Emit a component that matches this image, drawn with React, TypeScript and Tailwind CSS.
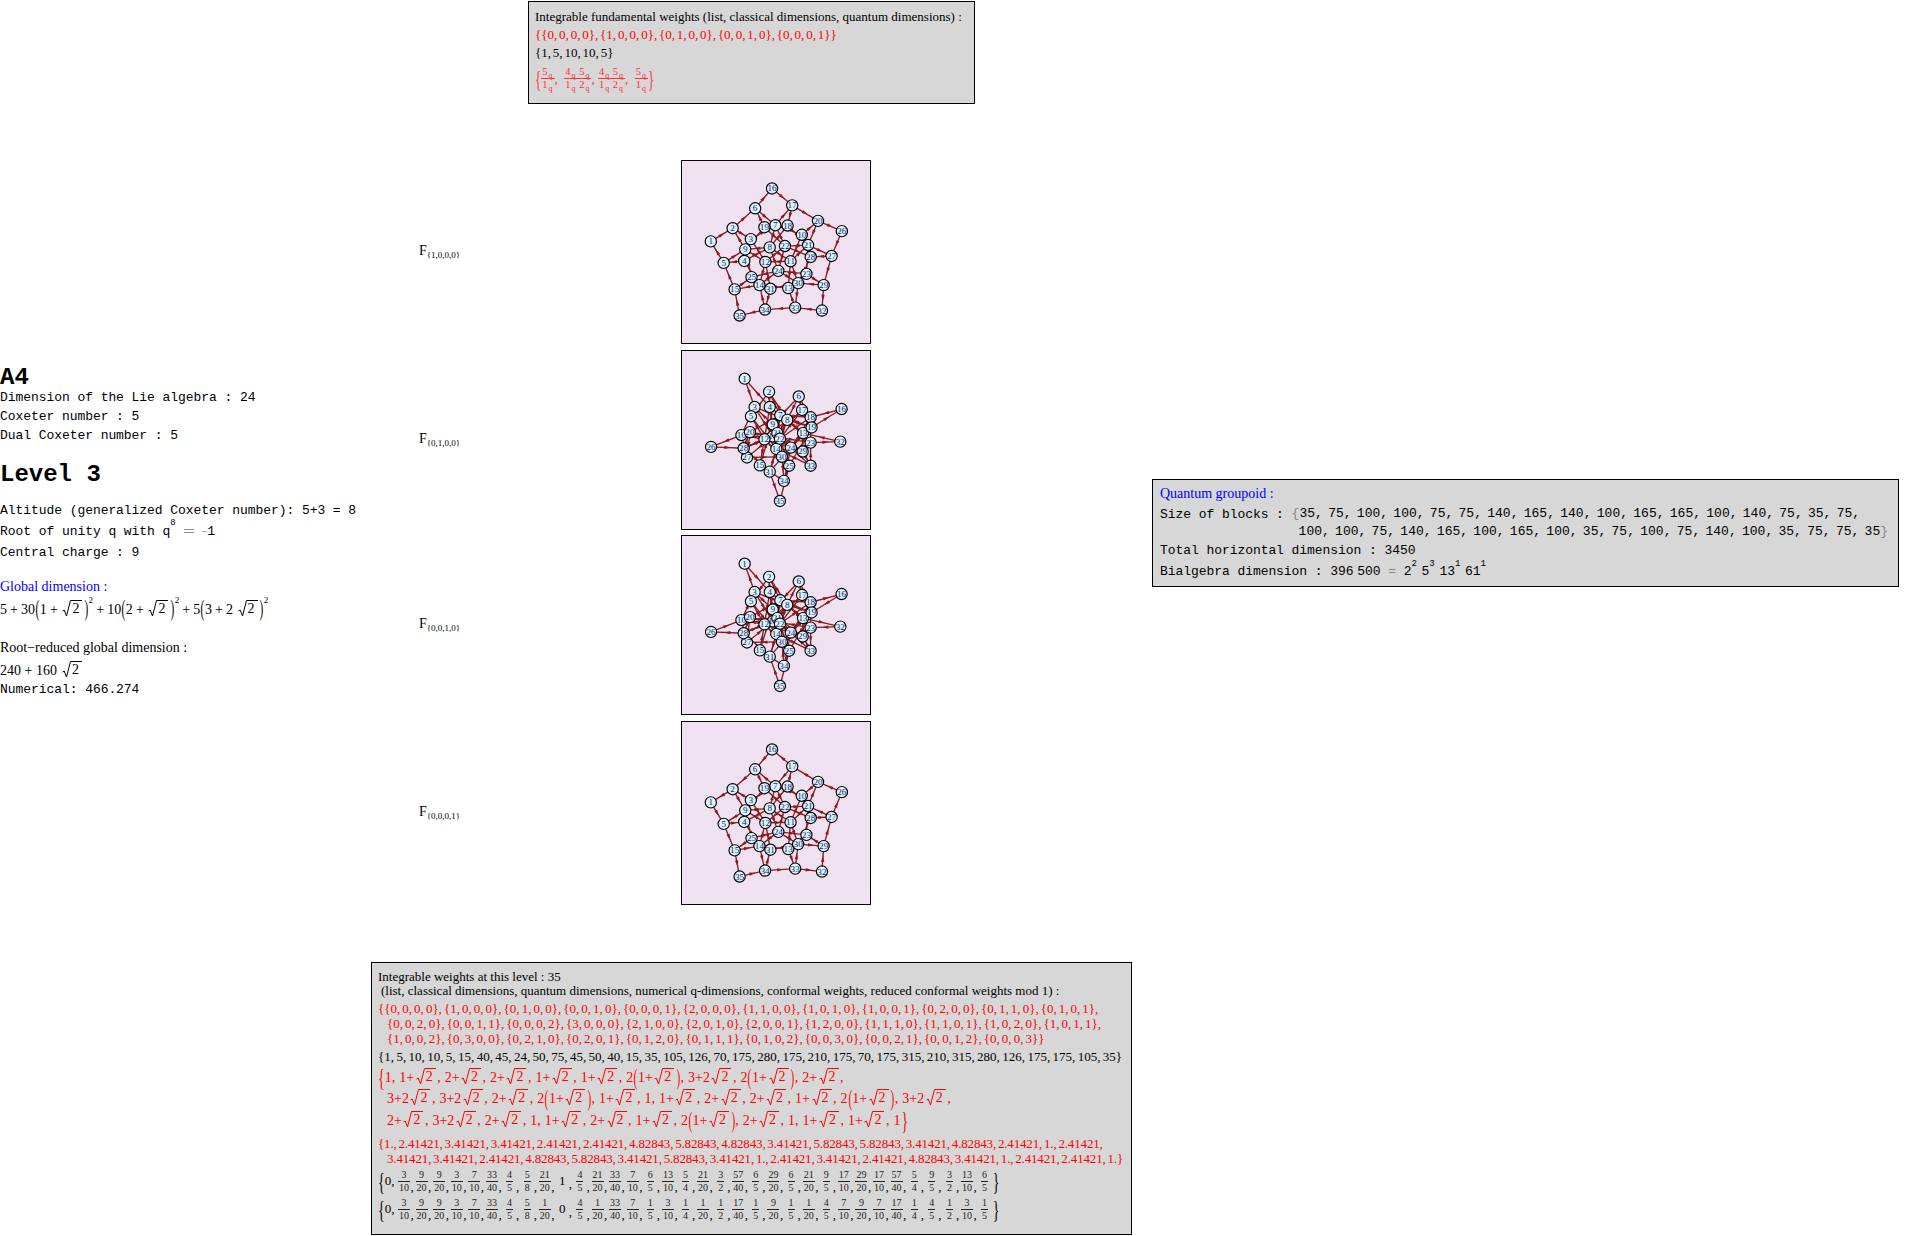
import { ReactNode } from "react";

const mono = "[font-family:'Liberation_Mono',monospace]";

const weights: number[][] = [
  [0,0,0,0],[1,0,0,0],[0,1,0,0],[0,0,1,0],[0,0,0,1],[2,0,0,0],[1,1,0,0],[1,0,1,0],[1,0,0,1],[0,2,0,0],
  [0,1,1,0],[0,1,0,1],[0,0,2,0],[0,0,1,1],[0,0,0,2],[3,0,0,0],[2,1,0,0],[2,0,1,0],[2,0,0,1],[1,2,0,0],
  [1,1,1,0],[1,1,0,1],[1,0,2,0],[1,0,1,1],[1,0,0,2],[0,3,0,0],[0,2,1,0],[0,2,0,1],[0,1,2,0],[0,1,1,1],
  [0,1,0,2],[0,0,3,0],[0,0,2,1],[0,0,1,2],[0,0,0,3],
];

const eps = [[1,0,0,0],[-1,1,0,0],[0,-1,1,0],[0,0,-1,1],[0,0,0,-1]];

// fusion with the k-th fundamental weight, truncated at level 3
function fusionEdges(k: number): [number, number][] {
  const shifts: number[][] = [];
  for (let mask = 0; mask < 32; mask++) {
    const picked = eps.filter((_, i) => mask & (1 << i));
    if (picked.length !== k) continue;
    shifts.push([0,1,2,3].map((c) => picked.reduce((s, e) => s + e[c], 0)));
  }
  const out: [number, number][] = [];
  weights.forEach((w, i) => {
    shifts.forEach((s) => {
      const t = w.map((v, c) => v + s[c]);
      if (t.some((v) => v < 0) || t.reduce((a, b) => a + b, 0) > 3) return;
      const j = weights.findIndex((u) => u.join() === t.join());
      if (j >= 0 && j !== i) out.push([i, j]);
    });
  });
  return out;
}

const pentagon: [number, number][] = [
  [106,259],[172,219],[227,252],[207,318],[145,324],[240,159],[301,210],[284,277],[210,283],[381,239],
  [347,319],[271,321],[340,400],[253,391],[178,404],[291,99],[352,150],[338,211],[268,216],[430,197],
  [400,270],[330,273],[395,357],[310,348],[229,367],[502,228],[471,303],[408,306],[447,391],[370,385],
  [286,402],[442,468],[361,459],[270,465],[193,483],
];

const star: [number, number][] = [
  [208,97],[282,137],[238,183],[284,183],[227,211],[372,151],[316,208],[337,222],[293,236],[198,268],
  [293,272],[268,281],[385,262],[304,310],[254,360],[502,189],[382,192],[408,214],[411,245],[224,259],
  [307,262],[315,279],[408,291],[348,306],[343,361],[106,304],[215,336],[205,308],[384,318],[321,334],
  [284,379],[498,288],[408,361],[327,407],[315,468],
];

function FusionGraph({ nodes, k, box }: { nodes: [number, number][]; k: number; box: string }) {
  return (
    <svg viewBox={box} className="block w-full h-full">
      {fusionEdges(k).map(([a, b], i) => {
        const [x1, y1] = nodes[a];
        const [x2, y2] = nodes[b];
        const mx = (x1 + x2) / 2;
        const my = (y1 + y2) / 2;
        const ang = (Math.atan2(y2 - y1, x2 - x1) * 180) / Math.PI;
        return (
          <g key={i} fill="#8b1a1f" stroke="#8b1a1f">
            <line x1={x1} y1={y1} x2={x2} y2={y2} strokeWidth={4} />
            <polygon points="10,0 -9,-5 -9,5" stroke="none" transform={`translate(${mx} ${my}) rotate(${ang})`} />
          </g>
        );
      })}
      {nodes.map(([x, y], i) => (
        <g key={i}>
          <circle cx={x} cy={y} r={17} fill="#dbf2fb" stroke="#000" strokeWidth={3.5} />
          <text x={x} y={y + 9} textAnchor="middle" fontSize={28} fill="#14206a" fontFamily="'Liberation Serif', serif">
            {i + 1}
          </text>
        </g>
      ))}
    </svg>
  );
}

function Sqrt({ children }: { children: ReactNode }) {
  return (
    <span className="inline-flex items-end align-[-3px] mx-[1.5px]">
      <svg width="9" height="17" viewBox="0 0 9 17" className="block">
        <path d="M0.5 11 L2.2 10 L4.5 16 L8.5 0.5 H9" fill="none" stroke="currentColor" strokeWidth="1" />
      </svg>
      <span className="border-t border-current pl-px pr-[3px] leading-[16px] h-[17px]">{children}</span>
    </span>
  );
}

function Paren({ children }: { children: ReactNode }) {
  return <span className="inline-block scale-y-[1.6] scale-x-[0.8] font-light">{children}</span>;
}

function Frac({ n, d, cls }: { n: ReactNode; d: ReactNode; cls: string }) {
  return (
    <span className={`inline-flex flex-col items-center align-middle ${cls}`}>
      <span className="px-px">{n}</span>
      <span className="px-px border-t border-current">{d}</span>
    </span>
  );
}

function Qn({ v }: { v: number }) {
  return (
    <span className="pr-[1px]">
      {v}
      <sub className="text-[8px] align-[-1px] leading-none pl-px">q</sub>
    </span>
  );
}

function Brace({ children, cls = "" }: { children: ReactNode; cls?: string }) {
  return <span className={`inline-block scale-y-[1.8] font-light ${cls}`}>{children}</span>;
}

const quantumDims: string[][] = [
  ["1","a","b","b","a","a","d","c","d","b"],
  ["c","c","b","d","a","1","a","b","b","a","d","c"],
  ["b","c","b","1","a","b","a","d","b","1","a","a","1"],
];

function QDim({ t }: { t: string }) {
  if (t === "1") return <span>1</span>;
  if (t === "a") return <span>1+<Sqrt>2</Sqrt></span>;
  if (t === "b") return <span>2+<Sqrt>2</Sqrt></span>;
  if (t === "c") return <span>3+2<Sqrt>2</Sqrt></span>;
  return <span>2<Paren>(</Paren>1+<Sqrt>2</Sqrt><Paren>)</Paren></span>;
}

const conformal = "3/10 9/20 9/20 3/10 7/10 33/40 4/5 5/8 21/20 1 4/5 21/20 33/40 7/10 6/5 13/10 5/4 21/20 3/2 57/40 6/5 29/20 6/5 21/20 9/5 17/10 29/20 17/10 57/40 5/4 9/5 3/2 13/10 6/5".split(" ");
const reduced = "3/10 9/20 9/20 3/10 7/10 33/40 4/5 5/8 1/20 0 4/5 1/20 33/40 7/10 1/5 3/10 1/4 1/20 1/2 17/40 1/5 9/20 1/5 1/20 4/5 7/10 9/20 7/10 17/40 1/4 4/5 1/2 3/10 1/5".split(" ");

function FracList({ items }: { items: string[] }) {
  return (
    <div className="flex items-center h-[28px]">
      <span className="text-[14px]"><Brace>{"{"}</Brace></span>
      <span className="text-[13px] mr-[3px]">0,</span>
      {items.map((f, i) => {
        const [n, d] = f.split("/");
        return (
          <span key={i} className="flex items-end w-[17.6px] shrink-0 text-[13px]">
            {d ? <Frac n={n} d={d} cls="text-[10px] leading-[12px] text-[#222] w-[13px]" /> : <span className="w-[13px] text-center self-center">{n}</span>}
            {i < items.length - 1 ? <span className="text-[13px] leading-[15px]">,</span> : null}
          </span>
        );
      })}
      <span className="text-[14px] -ml-[3px]"><Brace>{"}"}</Brace></span>
    </div>
  );
}

const panels = [
  { label: "{1,0,0,0}", nodes: pentagon, k: 1, box: "19 16 568 550", h: "h-[184px]" },
  { label: "{0,1,0,0}", nodes: star, k: 2, box: "19 13 568 540", h: "h-[180px]" },
  { label: "{0,0,1,0}", nodes: star, k: 3, box: "19 13 568 540", h: "h-[180px]" },
  { label: "{0,0,0,1}", nodes: pentagon, k: 4, box: "19 16 568 550", h: "h-[184px]" },
];

function MonoLine({ children, cls = "" }: { children: ReactNode; cls?: string }) {
  return <div className={`${mono} text-[13px] tracking-[-0.06px] leading-[19px] whitespace-pre ${cls}`}>{children}</div>;
}

const sup9 = "text-[9px] align-[5px] leading-none";
const sup2 = "text-[9px] align-[6px] leading-none";

export default function App() {
  return (
    <div className="w-[1908px] h-[1236px] bg-white text-black text-[13px] overflow-hidden [font-family:'Liberation_Serif',serif]">
      <div className="mt-px ml-[528px] w-[447px] h-[103px] border border-black bg-[#d7d7d7] pl-[6px] pt-[6px] leading-[17px]">
        <div>Integrable fundamental weights (list, classical dimensions, quantum dimensions) :</div>
        <div className="text-[#ff0000] mt-[1px] [word-spacing:-1.4px]">{"{{0, 0, 0, 0}, {1, 0, 0, 0}, {0, 1, 0, 0}, {0, 0, 1, 0}, {0, 0, 0, 1}}"}</div>
        <div className="mt-[1px] [word-spacing:-1.4px]">{"{1, 5, 10, 10, 5}"}</div>
        <div className="text-[#ff3040] flex items-center mt-[3px] h-[28px] whitespace-pre">
          <Brace>{"{"}</Brace>
          <Frac n={<Qn v={5} />} d={<Qn v={1} />} cls="text-[10.5px] leading-[12px]" />,{"  "}
          <Frac n={<><Qn v={4} /> <Qn v={5} /></>} d={<><Qn v={1} /> <Qn v={2} /></>} cls="text-[10.5px] leading-[12px]" />,{" "}
          <Frac n={<><Qn v={4} /> <Qn v={5} /></>} d={<><Qn v={1} /> <Qn v={2} /></>} cls="text-[10.5px] leading-[12px]" />,{"  "}
          <Frac n={<Qn v={5} />} d={<Qn v={1} />} cls="text-[10.5px] leading-[12px]" />
          <Brace>{"}"}</Brace>
        </div>
      </div>

      <div className="flex items-center mt-[56px]">
        <div className="w-[419px] shrink-0">
          <div className={`${mono} text-[24px] font-bold leading-[24px]`}>A4</div>
          <MonoLine cls="-mt-[2px]">Dimension of the Lie algebra : 24</MonoLine>
          <MonoLine>Coxeter number : 5</MonoLine>
          <MonoLine>Dual Coxeter number : 5</MonoLine>
          <div className={`${mono} text-[24px] font-bold leading-[28px] mt-[16px]`}>Level 3</div>
          <MonoLine cls="mt-[12px]">Altitude (generalized Coxeter number): 5+3 = 8</MonoLine>
          <MonoLine cls="mt-[2px]">
            Root of unity q with q<sup className={sup9}>8</sup> <span className="text-[#888] text-[10px] tracking-[-1px]">==</span> <span className="text-[#888] text-[10px]">−</span>1
          </MonoLine>
          <MonoLine cls="mt-[1px]">Central charge : 9</MonoLine>
          <div className="text-[#0000ff] text-[14px] leading-[18px] mt-[16px]">Global dimension :</div>
          <div className="text-[14px] leading-[24px] mt-[2px] whitespace-pre [word-spacing:-0.4px]">
            5 + 30<Paren>(</Paren>1 + <Sqrt>2</Sqrt><Paren>)</Paren><sup className={sup2}>2</sup> + 10<Paren>(</Paren>2 + <Sqrt>2</Sqrt><Paren>)</Paren><sup className={sup2}>2</sup> + 5<Paren>(</Paren>3 + 2 <Sqrt>2</Sqrt><Paren>)</Paren><sup className={sup2}>2</sup>
          </div>
          <div className="text-[14px] leading-[18px] mt-[17px]">Root−reduced global dimension :</div>
          <div className="text-[14px] leading-[22px] mt-[3px]">240 + 160 <Sqrt>2</Sqrt></div>
          <MonoLine cls="-mt-[2px]">Numerical: 466.274</MonoLine>
        </div>

        <div className="flex flex-col gap-[5.5px] shrink-0">
          {panels.map((p) => (
            <div key={p.label} className="flex items-center">
              <div className="w-[262px] text-[14px] pb-[3px]">
                F<sub className="text-[9px] align-[-1px] leading-none">{p.label}</sub>
              </div>
              <div className={`w-[190px] ${p.h} border border-black bg-[#f0e1f0]`}>
                <FusionGraph nodes={p.nodes} k={p.k} box={p.box} />
              </div>
            </div>
          ))}
        </div>

        <div className="ml-[281px] mt-[2px] w-[747px] h-[108px] border border-black bg-[#d7d7d7] pl-[7px] pt-[5px] shrink-0">
          <div className="text-[#0000ff] text-[14px] leading-[18px]">Quantum groupoid :</div>
          <div className="flex mt-[2px]">
            <MonoLine>Size of blocks : </MonoLine>
            <div className={`${mono} leading-[18px] whitespace-pre [word-spacing:-2.5px]`}>
              <div><span className="text-[#888]">{"{"}</span>35, 75, 100, 100, 75, 75, 140, 165, 140, 100, 165, 165, 100, 140, 75, 35, 75,</div>
              <div className="pl-[7px]">100, 100, 75, 140, 165, 100, 165, 100, 35, 75, 100, 75, 140, 100, 35, 75, 75, 35<span className="text-[#888]">{"}"}</span></div>
            </div>
          </div>
          <MonoLine>Total horizontal dimension : 3450</MonoLine>
          <MonoLine cls="mt-[2px]">
            Bialgebra dimension : 396<span className="mx-[-2px]"> </span>500 <span className="text-[#888]">=</span> 2<sup className={sup9}>2</sup><span className="[word-spacing:-3px]"> 5<sup className={sup9}>3</sup> 13<sup className={sup9}>1</sup> 61<sup className={sup9}>1</sup></span>
          </MonoLine>
        </div>
      </div>

      <div className="mt-[57px] ml-[371px] w-[761px] h-[273px] border border-black bg-[#d7d7d7] pl-[6px] pt-[7px]">
        <div className="leading-[14px]">Integrable weights at this level : 35</div>
        <div className="leading-[14px] pl-[3px]">(list, classical dimensions, quantum dimensions, numerical q-dimensions, conformal weights, reduced conformal weights mod 1) :</div>
        <div className="text-[#ff0000] leading-[15px] mt-[3px] whitespace-pre [word-spacing:-1.2px]">
          <div>{"{{0, 0, 0, 0}, {1, 0, 0, 0}, {0, 1, 0, 0}, {0, 0, 1, 0}, {0, 0, 0, 1}, {2, 0, 0, 0}, {1, 1, 0, 0}, {1, 0, 1, 0}, {1, 0, 0, 1}, {0, 2, 0, 0}, {0, 1, 1, 0}, {0, 1, 0, 1},"}</div>
          <div className="pl-[9px]">{"{0, 0, 2, 0}, {0, 0, 1, 1}, {0, 0, 0, 2}, {3, 0, 0, 0}, {2, 1, 0, 0}, {2, 0, 1, 0}, {2, 0, 0, 1}, {1, 2, 0, 0}, {1, 1, 1, 0}, {1, 1, 0, 1}, {1, 0, 2, 0}, {1, 0, 1, 1},"}</div>
          <div className="pl-[9px]">{"{1, 0, 0, 2}, {0, 3, 0, 0}, {0, 2, 1, 0}, {0, 2, 0, 1}, {0, 1, 2, 0}, {0, 1, 1, 1}, {0, 1, 0, 2}, {0, 0, 3, 0}, {0, 0, 2, 1}, {0, 0, 1, 2}, {0, 0, 0, 3}}"}</div>
        </div>
        <div className="leading-[15px] mt-[3px] whitespace-pre [word-spacing:-0.85px]">{"{1, 5, 10, 10, 5, 15, 40, 45, 24, 50, 75, 45, 50, 40, 15, 35, 105, 126, 70, 175, 280, 175, 210, 175, 70, 175, 315, 210, 315, 280, 126, 175, 175, 105, 35}"}</div>
        <div className="text-[#ff0000] text-[14px] mt-[3px]">
          {quantumDims.map((row, r) => (
            <div key={r} className={`flex items-center h-[21.5px] gap-[4px] whitespace-pre ${r > 0 ? "pl-[9px]" : ""}`}>
              {r === 0 ? <Brace cls="-mr-[4px]">{"{"}</Brace> : null}
              {row.map((t, i) => (
                <span key={i}>
                  <QDim t={t} />
                  {i < row.length - 1 || r < 2 ? "," : ""}
                </span>
              ))}
              {r === 2 ? <Brace cls="-ml-[3px]">{"}"}</Brace> : null}
            </div>
          ))}
        </div>
        <div className="text-[#ff0000] leading-[15px] mt-[5px] whitespace-pre tracking-[-0.16px] [word-spacing:-1.2px]">
          <div>{"{1., 2.41421, 3.41421, 3.41421, 2.41421, 2.41421, 4.82843, 5.82843, 4.82843, 3.41421, 5.82843, 5.82843, 3.41421, 4.82843, 2.41421, 1., 2.41421,"}</div>
          <div className="pl-[9px]">{"3.41421, 3.41421, 2.41421, 4.82843, 5.82843, 3.41421, 5.82843, 3.41421, 1., 2.41421, 3.41421, 2.41421, 4.82843, 3.41421, 1., 2.41421, 2.41421, 1.}"}</div>
        </div>
        <div className="mt-[1px]">
          <FracList items={conformal} />
          <FracList items={reduced} />
        </div>
      </div>
    </div>
  );
}
